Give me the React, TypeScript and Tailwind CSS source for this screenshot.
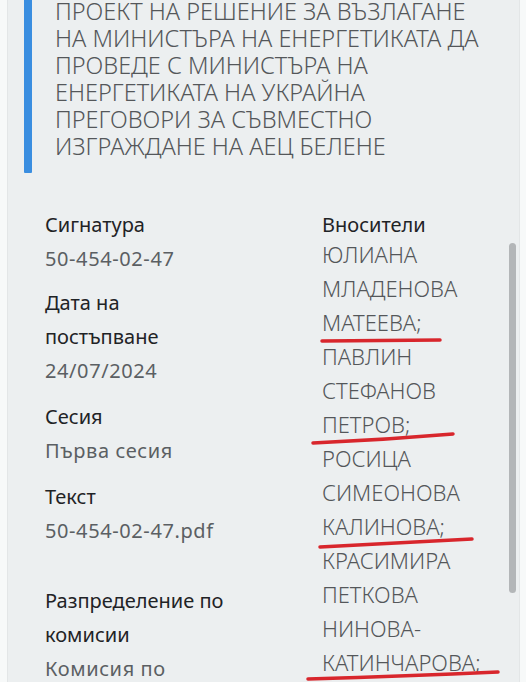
import React from 'react';

const title = [
  'ПРОЕКТ НА РЕШЕНИЕ ЗА ВЪЗЛАГАНЕ',
  'НА МИНИСТЪРА НА ЕНЕРГЕТИКАТА ДА',
  'ПРОВЕДЕ С МИНИСТЪРА НА',
  'ЕНЕРГЕТИКАТА НА УКРАЙНА',
  'ПРЕГОВОРИ ЗА СЪВМЕСТНО',
  'ИЗГРАЖДАНЕ НА АЕЦ БЕЛЕНЕ',
];

const names = [
  'ЮЛИАНА',
  'МЛАДЕНОВА',
  'МАТЕЕВА;',
  'ПАВЛИН',
  'СТЕФАНОВ',
  'ПЕТРОВ;',
  'РОСИЦА',
  'СИМЕОНОВА',
  'КАЛИНОВА;',
  'КРАСИМИРА',
  'ПЕТКОВА',
  'НИНОВА-',
  'КАТИНЧАРОВА;',
];

const Label = ({ children }: { children: React.ReactNode }) => (
  <div className="text-[20px] text-[#1f2326]">{children}</div>
);
const Value = ({ children }: { children: React.ReactNode }) => (
  <div className="text-[20px] tracking-[0.6px] text-[#5b5f63]">{children}</div>
);

export default function App() {
  return (
    <div className="w-[526px] h-[682px] overflow-hidden bg-[#f7f9f9] flex" style={{ fontFamily: '"Noto Sans", "Open Sans", sans-serif' }}>
      <div className="w-[8px] shrink-0 border-r border-[#e3e6e7]" />
      <div className="relative flex-1 bg-[#eceff0]">
        {/* title */}
        <div className="flex pl-[16px]">
          <div className="w-[8px] h-[173px] bg-[#3a8ee0] rounded-b-[1px] shrink-0" />
          <div className="ml-[23px] -mt-[2px] text-[23.5px] leading-[27px] font-light text-[#54575a] whitespace-nowrap">
            {title.map((t) => (
              <div key={t}>{t}</div>
            ))}
          </div>
        </div>

        {/* details */}
        <div className="grid grid-cols-[277px_1fr] pl-[37px] mt-[35px] leading-[34px]">
          <div className="flex flex-col">
            <Label>Сигнатура</Label>
            <Value>50-454-02-47</Value>
            <div className="mt-[10px]" />
            <Label>Дата на</Label>
            <Label>постъпване</Label>
            <Value>24/07/2024</Value>
            <div className="mt-[12px]" />
            <Label>Сесия</Label>
            <Value>Първа сесия</Value>
            <div className="mt-[12px]" />
            <Label>Текст</Label>
            <Value>50-454-02-47.pdf</Value>
            <div className="mt-[36px]" />
            <Label>Разпределение по</Label>
            <Label>комисии</Label>
            <Value>Комисия по</Value>
          </div>
          <div className="flex flex-col">
            <Label>Вносители</Label>
            <div className="-mt-[5px] text-[22px] font-light text-[#54575a]">
              {names.map((n) => (
                <div key={n}>{n}</div>
              ))}
            </div>
          </div>
        </div>

        {/* scrollbar */}
        <div className="absolute right-[3px] top-[243px] w-[7px] h-[350px] rounded-full bg-[#b3b6b8]" />

        {/* red annotations */}
        <svg className="absolute left-0 top-0 pointer-events-none" width="511" height="682">
          <g stroke="#d8262c" strokeWidth="3.5" strokeLinecap="round" fill="none">
            <path d="M314 341 L432 340" />
            <path d="M305 443 Q375 440 445 434" />
            <path d="M312 547 Q390 543 464 539" />
            <path d="M300 679 Q400 676 490 672" />
          </g>
        </svg>
      </div>
      <div className="w-[7px] shrink-0 border-l border-[#e3e6e7]" />
    </div>
  );
}
